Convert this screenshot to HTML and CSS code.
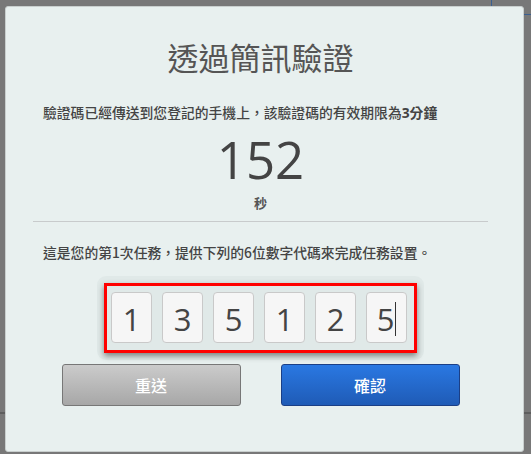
FILE: index.html
```html
<!DOCTYPE html>
<html lang="zh-Hant">
<head>
    <meta charset="UTF-8">
    <meta name="viewport" content="width=device-width, initial-scale=1.0">
    <title>透過簡訊驗證</title>
    <link rel="stylesheet" href="styles.css">
</head>
<body>
    <div class="backdrop">
        <div class="bg-line bg-line-left"></div>
        <div class="bg-line bg-line-right"></div>
        <div class="bg-blue bg-blue-top"></div>
        <div class="bg-blue bg-blue-side"></div>
    </div>

    <div class="modal">
        <div class="content">
            <h1 class="title">透過簡訊驗證</h1>
            <p class="note">驗證碼已經傳送到您登記的手機上，該驗證碼的有效期限為<b>3分鐘</b></p>

            <div class="countdown">152</div>
            <div class="unit">秒</div>

            <hr class="divider">

            <p class="note">這是您的第1次任務，提供下列的6位數字代碼來完成任務設置。</p>

            <div class="code-wrap">
                <div class="code-box">
                    <div class="digit">1</div>
                    <div class="digit">3</div>
                    <div class="digit">5</div>
                    <div class="digit">1</div>
                    <div class="digit">2</div>
                    <div class="digit">5<span class="caret"></span></div>
                </div>
            </div>

            <div class="actions">
                <button type="button" class="btn btn-resend">重送</button>
                <button type="button" class="btn btn-confirm">確認</button>
            </div>
        </div>
    </div>
</body>
</html>
```

FILE: styles.css
```css
body {
    margin: 0;
    padding: 6px 0 0 5px;
    background-color: #787878;
    font-family: "Open Sans", "Noto Sans CJK TC", sans-serif;
    color: #444;
    height: 448px;
    overflow: hidden;
}

/* page behind the overlay */
.backdrop {
    position: absolute;
    inset: 0;
}

.bg-line {
    position: absolute;
    top: 412px;
    height: 2px;
    background-color: #5e5e5e;
}

.bg-line-left {
    left: 0;
    width: 5px;
}

.bg-line-right {
    right: 0;
    width: 7px;
}

.bg-blue {
    position: absolute;
    background-color: #3a5f8f;
}

.bg-blue-top {
    left: 491px;
    top: 0;
    width: 1px;
    height: 6px;
}

.bg-blue-side {
    left: 523px;
    top: 14px;
    width: 8px;
    height: 1px;
}

.modal {
    position: relative;
    width: 517px;
    height: 444px;
    background-color: #e8f0ef;
    border: 1px solid #c9cfce;
    border-radius: 3px;
}

.content {
    width: 455px;
    margin-left: 27px;
    padding-top: 27px;
    display: flex;
    flex-direction: column;
    align-items: center;
}

.title {
    margin: 0;
    font-family: "Noto Sans CJK TC", sans-serif;
    font-size: 31px;
    font-weight: normal;
    line-height: 46px;
    color: #555;
}

.note {
    align-self: stretch;
    margin: 23px 0 0;
    padding-left: 10px;
    font-size: 13.8px;
    line-height: 18px;
    font-family: "Noto Sans CJK TC", sans-serif;
    font-weight: 500;
    color: #444;
    white-space: nowrap;
}

.note b {
    font-family: "Open Sans", "Noto Sans CJK TC", sans-serif;
    font-weight: bold;
}

.countdown {
    margin-top: 7px;
    font-size: 51px;
    line-height: 60px;
    color: #444;
}

.unit {
    margin-top: 5px;
    font-family: "Noto Sans CJK TC", sans-serif;
    font-size: 13px;
    line-height: 18px;
    font-weight: bold;
    color: #555;
}

.divider {
    align-self: stretch;
    margin: 9px 0 0;
    border: none;
    border-top: 1px solid #c8cbcc;
}

.divider + .note {
    margin-top: 21px;
}

.code-wrap {
    margin-top: 15px;
    padding: 7px;
    background-color: #e0e9e8;
    border-radius: 9px;
}

.code-box {
    display: flex;
    gap: 10px;
    padding: 6px 7px 7px 4px;
    border: 3px solid #f00;
    box-shadow: 0 3px 6px rgba(0, 0, 0, 0.45);
}

.digit {
    width: 39px;
    height: 47px;
    padding-top: 2px;
    display: flex;
    align-items: center;
    justify-content: center;
    background-color: #f6f6f6;
    border: 1px solid #c9c9c9;
    border-radius: 4px;
    font-size: 31px;
    color: #444;
}

.caret {
    display: inline-block;
    width: 1px;
    height: 34px;
    margin-left: 1px;
    background-color: #333;
}

.actions {
    margin-top: 4px;
    display: flex;
    gap: 40px;
}

.btn {
    width: 179px;
    height: 42px;
    border-radius: 3px;
    font-family: "Noto Sans CJK TC", sans-serif;
    font-size: 16px;
    font-weight: 500;
    color: white;
    cursor: pointer;
}

.btn-resend {
    border: 1px solid #777;
    background: linear-gradient(#cbcbcb, #a7a7a7);
}

.btn-confirm {
    border: 1px solid #1b3f86;
    background: linear-gradient(#2a78e2, #1f5bb6);
}
```
